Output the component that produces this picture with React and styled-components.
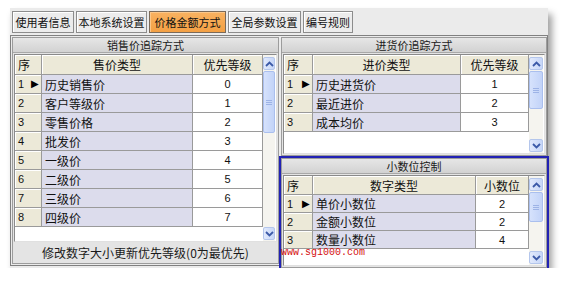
import React from 'react';
import styled, { createGlobalStyle } from 'styled-components';

const GlobalStyle = createGlobalStyle`
  body {
    margin: 0;
    background: #fff;
    font-family: "Noto Sans CJK SC", "Liberation Sans", sans-serif;
    font-size: 11px;
    color: #111;
  }
`;

const tabs = ['使用者信息', '本地系统设置', '价格金额方式', '全局参数设置', '编号规则'];
const tabWidths = [62, 71, 77, 73, 50];

const saleRows = [
  ['历史销售价', 0], ['客户等级价', 1], ['零售价格', 2], ['批发价', 3],
  ['一级价', 4], ['二级价', 5], ['三级价', 6], ['四级价', 7],
];
const buyRows = [['历史进货价', 1], ['最近进价', 2], ['成本均价', 3]];
const decRows = [['单价小数位', 2], ['金额小数位', 2], ['数量小数位', 4]];

const Chevron = ({ up }) => (
  <svg width="9" height="6" viewBox="0 0 9 6">
    <polyline
      points={up ? '1,5 4.5,1.5 8,5' : '1,1 4.5,4.5 8,1'}
      fill="none" stroke="#3c5aa8" strokeWidth="1.8" />
  </svg>
);

const Grid = ({ cols, head, rows, height, thumb, rowH = 19 }) => (
  <GridBox $h={height}>
    <Table>
      <Row $cols={cols} $h={rowH + 1}>
        <HeadCell $left>序</HeadCell>
        <HeadCell>{head[0]}</HeadCell>
        <HeadCell>{head[1]}</HeadCell>
      </Row>
      {rows.map(([name, val], i) => (
        <Row key={name} $cols={cols} $h={rowH}>
          <SeqCell>
            {i + 1}
            {i === 0 && <Pointer>▶</Pointer>}
          </SeqCell>
          <NameCell>{name}</NameCell>
          <ValCell>{val}</ValCell>
        </Row>
      ))}
    </Table>
    <ScrollBar>
      <ScrollBtn><Chevron up /></ScrollBtn>
      <Track>
        <Thumb style={{ height: thumb }}>
          <Grip /><Grip /><Grip />
        </Thumb>
      </Track>
      <ScrollBtn><Chevron /></ScrollBtn>
    </ScrollBar>
  </GridBox>
);

export default function App() {
  return (
    <>
      <GlobalStyle />
      <Stage>
        <Window>
          <TabBar>
            {tabs.map((t, i) => (
              <Tab key={t} $w={tabWidths[i]} $active={i === 2}>{t}</Tab>
            ))}
          </TabBar>
          <Body>
            <Panel>
              <PanelTitle>销售价追踪方式</PanelTitle>
              <Grid cols="27px 151px 70px" head={['售价类型', '优先等级']}
                rows={saleRows} height={191} thumb={62} />
              <Footer>修改数字大小更新优先等级(0为最优先)</Footer>
            </Panel>
            <RightCol>
              <Panel>
                <PanelTitle>进货价追踪方式</PanelTitle>
                <Grid cols="29px 148px 68px" head={['进价类型', '优先等级']}
                  rows={buyRows} height={100} thumb={38} />
              </Panel>
              <Panel $highlight>
                <PanelTitle>小数位控制</PanelTitle>
                <Grid cols="29px 163px 53px" head={['数字类型', '小数位']}
                  rows={decRows} height={91} thumb={30} rowH={18} />
              </Panel>
            </RightCol>
          </Body>
          <Watermark>www.sg1000.com</Watermark>
        </Window>
      </Stage>
    </>
  );
}

const Stage = styled.div`
  padding: 8px 0 0 10px;
`;

const Window = styled.div`
  position: relative;
  width: 538px;
  height: 260px;
  box-sizing: border-box;
  background: #ebebeb;
  box-shadow: 4px 6px 7px rgba(0, 0, 0, 0.38);
`;

const TabBar = styled.div`
  display: flex;
  gap: 2px;
  padding: 3px 2px 0;
  height: 22px;
`;

const Tab = styled.div`
  width: ${({ $w }) => $w}px;
  height: 22px;
  box-sizing: border-box;
  display: flex;
  align-items: center;
  justify-content: center;
  white-space: nowrap;
  border: 1px solid ${({ $active }) => ($active ? '#7a6a5a' : '#8c8c8c')};
  background: ${({ $active }) => ($active ? 'linear-gradient(#f9b261, #f3a044)' : '#ececec')};
  box-shadow: inset 1px 1px 0 ${({ $active }) => ($active ? '#fcc88a' : '#ffffff')};
`;

const Body = styled.div`
  margin-top: 2px;
  height: 231px;
  box-sizing: border-box;
  border: 1px solid #808080;
  padding: 1px;
  display: flex;
  gap: 2px;
`;

const RightCol = styled.div`
  flex: 1;
  display: flex;
  flex-direction: column;
  gap: 2px;
`;

const Panel = styled.div`
  width: 267px;
  box-sizing: border-box;
  border: 1px solid #9c9c9c;
  background: #e4e4e4;
  padding: 0 1px 1px;
  display: flex;
  flex-direction: column;
  ${RightCol} > & {
    width: auto;
  }
  ${({ $highlight }) => $highlight && `
    flex: 1;
    outline: 2px solid #2222b4;
    outline-offset: 0px;
  `}
`;

const PanelTitle = styled.div`
  height: 14px;
  line-height: 14px;
  text-align: center;
  background: linear-gradient(#e6e6e6, #d2d2d2);
  border-bottom: 1px solid #a8a8a8;
  margin: 0 -1px 1px;
  color: #1a1a1a;
`;

const GridBox = styled.div`
  height: ${({ $h }) => $h}px;
  box-sizing: border-box;
  display: flex;
  background: #fff;
  border: 1px solid #8a8a8a;
  border-right-color: #e0e0e0;
  border-bottom-color: #e0e0e0;
`;

const Table = styled.div`
  display: flex;
  flex-direction: column;
`;

const Row = styled.div`
  display: grid;
  grid-template-columns: ${({ $cols }) => $cols};
  height: ${({ $h }) => $h}px;
`;

const Cell = styled.div`
  box-sizing: border-box;
  border-right: 1px solid #9a9a9a;
  border-bottom: 1px solid #9a9a9a;
  display: flex;
  align-items: center;
  padding: 0 3px;
  white-space: nowrap;
`;

const HeadCell = styled(Cell)`
  background: #ece9d8;
  justify-content: ${({ $left }) => ($left ? 'flex-start' : 'center')};
  box-shadow: inset 1px 1px 0 #fff;
  font-size: 12px;
`;

const SeqCell = styled(Cell)`
  position: relative;
  background: #ece9d8;
  box-shadow: inset 1px 1px 0 #fff;
  font-family: "Liberation Sans", sans-serif;
  font-size: 11px;
`;

const Pointer = styled.span`
  position: absolute;
  right: 2px;
  top: 3px;
  font-size: 10px;
  color: #000;
`;

const NameCell = styled(Cell)`
  background: #dcdcec;
  font-size: 12px;
`;

const ValCell = styled(Cell)`
  background: #fff;
  justify-content: center;
  font-family: "Liberation Sans", sans-serif;
  font-size: 11px;
`;

const ScrollBar = styled.div`
  width: 14px;
  margin-left: auto;
  margin-right: 1px;
  padding: 2px 0 1px;
  display: flex;
  flex-direction: column;
  background: #f5f4ef;
`;

const ScrollBtn = styled.div`
  height: 13px;
  box-sizing: border-box;
  border: 1px solid #b4c6ec;
  border-radius: 2px;
  background: linear-gradient(90deg, #e2eafc, #c6d6f8);
  display: flex;
  align-items: center;
  justify-content: center;
`;

const Track = styled.div`
  flex: 1;
  padding-top: 1px;
`;

const Thumb = styled.div`
  box-sizing: border-box;
  border: 1px solid #aabfee;
  border-radius: 2px;
  background: linear-gradient(90deg, #d6e2fc, #c2d3f8);
  display: flex;
  flex-direction: column;
  align-items: center;
  justify-content: center;
  gap: 1px;
`;

const Grip = styled.div`
  width: 6px;
  height: 1px;
  background: #9db3e6;
`;

const Footer = styled.div`
  height: 20px;
  display: flex;
  align-items: center;
  justify-content: center;
  color: #1a1a1a;
  font-size: 12px;
`;

const Watermark = styled.div`
  position: absolute;
  left: 271px;
  top: 240px;
  font-family: "Liberation Mono", monospace;
  font-size: 10px;
  line-height: 10px;
  color: #d41010;
`;
